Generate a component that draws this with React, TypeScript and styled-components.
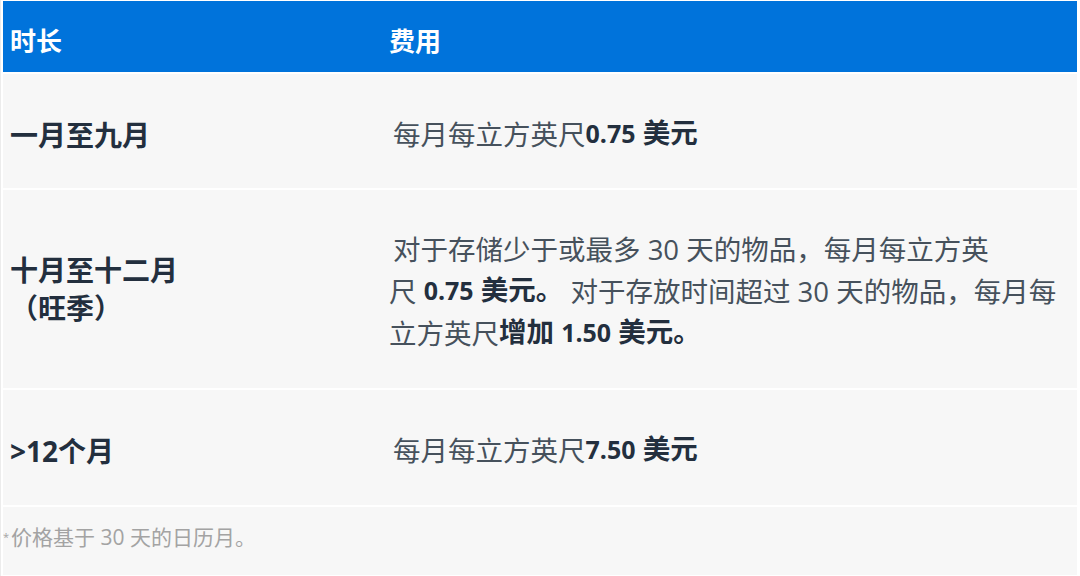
import styled, { createGlobalStyle } from "styled-components";

const GlobalStyle = createGlobalStyle`
  html, body {
    margin: 0;
    padding: 0;
    background: #ffffff;
  }
  body {
    font-family: "Open Sans", "Noto Sans CJK SC", sans-serif;
  }
`;

const Page = styled.div`
  width: 1080px;
  height: 576px;
  overflow: hidden;
  padding: 1px 3px 0 2px;
  box-sizing: border-box;
  background: #ffffff;
  border-left: 1px solid #ececec;
`;

const Table = styled.div`
  display: flex;
  flex-direction: column;
  gap: 2px;
`;

const HeaderRow = styled.div`
  display: grid;
  grid-template-columns: 386px 1fr;
  height: 71px;
  align-items: center;
  background: #0073db;
  color: #ffffff;
  font-size: 26px;
  font-weight: 700;
  padding-top: 7px;
  box-sizing: border-box;
`;

const HeaderCell = styled.div<{ $first?: boolean }>`
  padding-left: ${(p) => (p.$first ? "7px" : "0")};
`;

const Row = styled.div<{ $height: number }>`
  display: grid;
  grid-template-columns: 386px 1fr;
  height: ${(p) => p.$height}px;
  align-items: center;
  background: #f7f7f7;
`;

const Label = styled.div<{ $multi?: boolean }>`
  padding-left: 7px;
  padding-top: ${(p) => (p.$multi ? "0" : "7px")};
  font-size: 28px;
  font-weight: 700;
  line-height: ${(p) => (p.$multi ? "38px" : "34px")};
  color: #232f3e;
`;

const Fee = styled.div`
  font-size: 27.5px;
  line-height: 40px;
  color: #46515c;
  text-indent: 4px;
  padding-top: 5px;
  white-space: nowrap;
`;

const Amount = styled.b`
  font-weight: 700;
  color: #232f3e;
  vertical-align: 2px;
`;

const Digits = styled.span`
  font-size: 25px;
`;

const Footer = styled.div`
  background: #f7f7f7;
  height: 68px;
  display: flex;
  align-items: center;
  font-size: 21px;
  color: #a3a3a3;
  padding-bottom: 10px;
  box-sizing: border-box;
`;

const Star = styled.span`
  font-size: 11px;
  vertical-align: 8px;
  margin-right: 2px;
`;

const App = () => {
  return (
    <>
      <GlobalStyle />
      <Page>
        <Table>
          <HeaderRow>
            <HeaderCell $first>时长</HeaderCell>
            <HeaderCell>费用</HeaderCell>
          </HeaderRow>
          <Row $height={114}>
            <Label>一月至九月</Label>
            <Fee>
              每月每立方英尺<Amount><Digits>0.75</Digits> 美元</Amount>
            </Fee>
          </Row>
          <Row $height={198}>
            <Label $multi>
              十月至十二月
              <br />
              （旺季）
            </Label>
            <Fee>
              对于存储少于或最多 30 天的物品，每月每立方英
              <br />
              尺 <Amount><Digits>0.75</Digits> 美元。</Amount> 对于存放时间超过 30 天的物品，每月每
              <br />
              立方英尺<Amount>增加 <Digits>1.50</Digits> 美元。</Amount>
            </Fee>
          </Row>
          <Row $height={115}>
            <Label>&gt;12个月</Label>
            <Fee>
              每月每立方英尺<Amount><Digits>7.50</Digits> 美元</Amount>
            </Fee>
          </Row>
          <Footer>
            <Star>*</Star>价格基于 30 天的日历月。
          </Footer>
        </Table>
      </Page>
    </>
  );
};

export default App;
